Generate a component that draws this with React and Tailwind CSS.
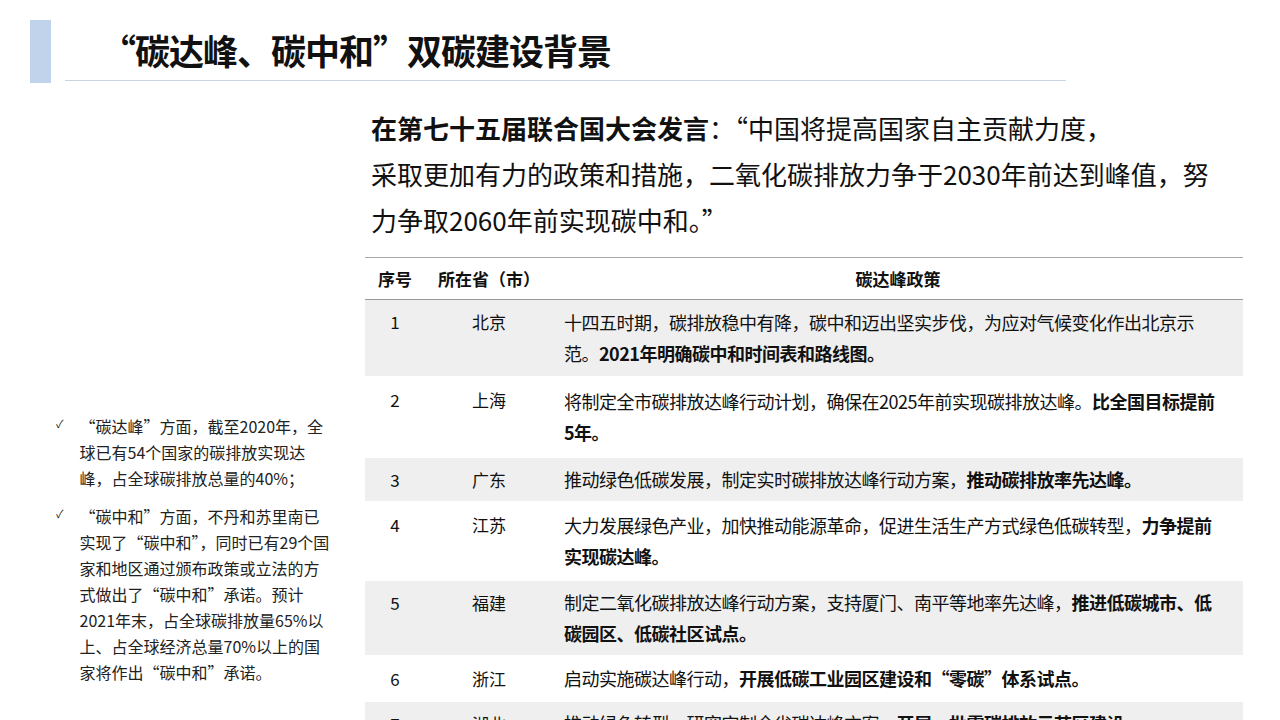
export default function App() {
  const f = { fontFamily: '"Noto Sans CJK SC", "Noto Sans", sans-serif' };
  const rows = [
    ["1", "北京", "十四五时期，碳排放稳中有降，碳中和迈出坚实步伐，为应对气候变化作出北京示范。", "2021年明确碳中和时间表和路线图。", true, "min-h-[76px]"],
    ["2", "上海", "将制定全市碳排放达峰行动计划，确保在2025年前实现碳排放达峰。", "比全国目标提前5年。", false, "min-h-[78px]"],
    ["3", "广东", "推动绿色低碳发展，制定实时碳排放达峰行动方案，", "推动碳排放率先达峰。", true, "min-h-[42px]"],
    ["4", "江苏", "大力发展绿色产业，加快推动能源革命，促进生活生产方式绿色低碳转型，", "力争提前实现碳达峰。", false, "min-h-[76px]"],
    ["5", "福建", "制定二氧化碳排放达峰行动方案，支持厦门、南平等地率先达峰，", "推进低碳城市、低碳园区、低碳社区试点。", true, "min-h-[74px]"],
    ["6", "浙江", "启动实施碳达峰行动，", "开展低碳工业园区建设和“零碳”体系试点。", false, "min-h-[42px]"],
    ["7", "湖北", "推动绿色转型，研究定制全省碳达峰方案，", "开展一批零碳排放示范区建设。", true, "min-h-[30px]"],
  ];
  return (
    <div className="w-[1280px] h-[720px] overflow-hidden bg-white text-[#111] relative" style={f}>
      <div className="flex items-start pt-[20px]">
        <div className="ml-[30px] w-[21px] h-[63px] bg-[#c0d3ea]" />
        <div className="flex flex-col">
          <div className="ml-[50px] h-[60px] flex items-center text-[35px] font-bold tracking-[-1px]">“碳达峰、碳中和”双碳建设背景</div>
          <div className="ml-[14px] w-[1001px] h-px bg-[#c9d4e2]" />
        </div>
      </div>
      <div className="flex">
        <div className="w-[360px] shrink-0 pt-[330px] pl-[56px] pr-[26px] text-[16px] leading-[26px] text-[#222]">
          <div className="flex gap-[16px]"><span className="text-[11px] leading-[20px]">✓</span><p>“碳达峰”方面，截至2020年，全球已有54个国家的碳排放实现达峰，占全球碳排放总量的40%；</p></div>
          <div className="flex gap-[16px] mt-[12px]"><span className="text-[11px] leading-[20px]">✓</span><p>“碳中和”方面，不丹和苏里南已实现了“碳中和”，同时已有29个国家和地区通过颁布政策或立法的方式做出了“碳中和”承诺。预计2021年末，占全球碳排放量65%以上、占全球经济总量70%以上的国家将作出“碳中和”承诺。</p></div>
        </div>
        <div className="w-[883px]">
          <p className="mt-[22px] ml-[11px] text-[26px] leading-[46px] pr-[18px]"><b>在第七十五届联合国大会发言</b>：“中国将提高国家自主贡献力度，<br />采取更加有力的政策和措施，二氧化碳排放力争于2030年前达到峰值，努力争取2060年前实现碳中和。”</p>
          <div className="mt-[14px] ml-[5px] border-t border-[#aaa] text-[17px]">
            <div className="flex h-[42px] items-center font-bold border-b border-[#999]">
              <div className="w-[60px] text-center">序号</div>
              <div className="w-[128px] text-center">所在省（市）</div>
              <div className="flex-1 text-center">碳达峰政策</div>
            </div>
            {rows.map(([n, p, t, b, g, h]) => (
              <div key={n} className={`flex items-center leading-[31px] ${h} ${g ? "bg-[#efefef]" : ""} mb-[2px]`}>
                <div className="w-[60px] text-center self-start pt-[6px]">{n}</div>
                <div className="w-[128px] text-center self-start pt-[6px]">{p}</div>
                <div className="flex-1 pl-[11px] pr-[20px] py-[6px] text-[18px] tracking-[-0.5px]">{t}<b>{b}</b></div>
              </div>
            ))}
          </div>
        </div>
      </div>
    </div>
  );
}
